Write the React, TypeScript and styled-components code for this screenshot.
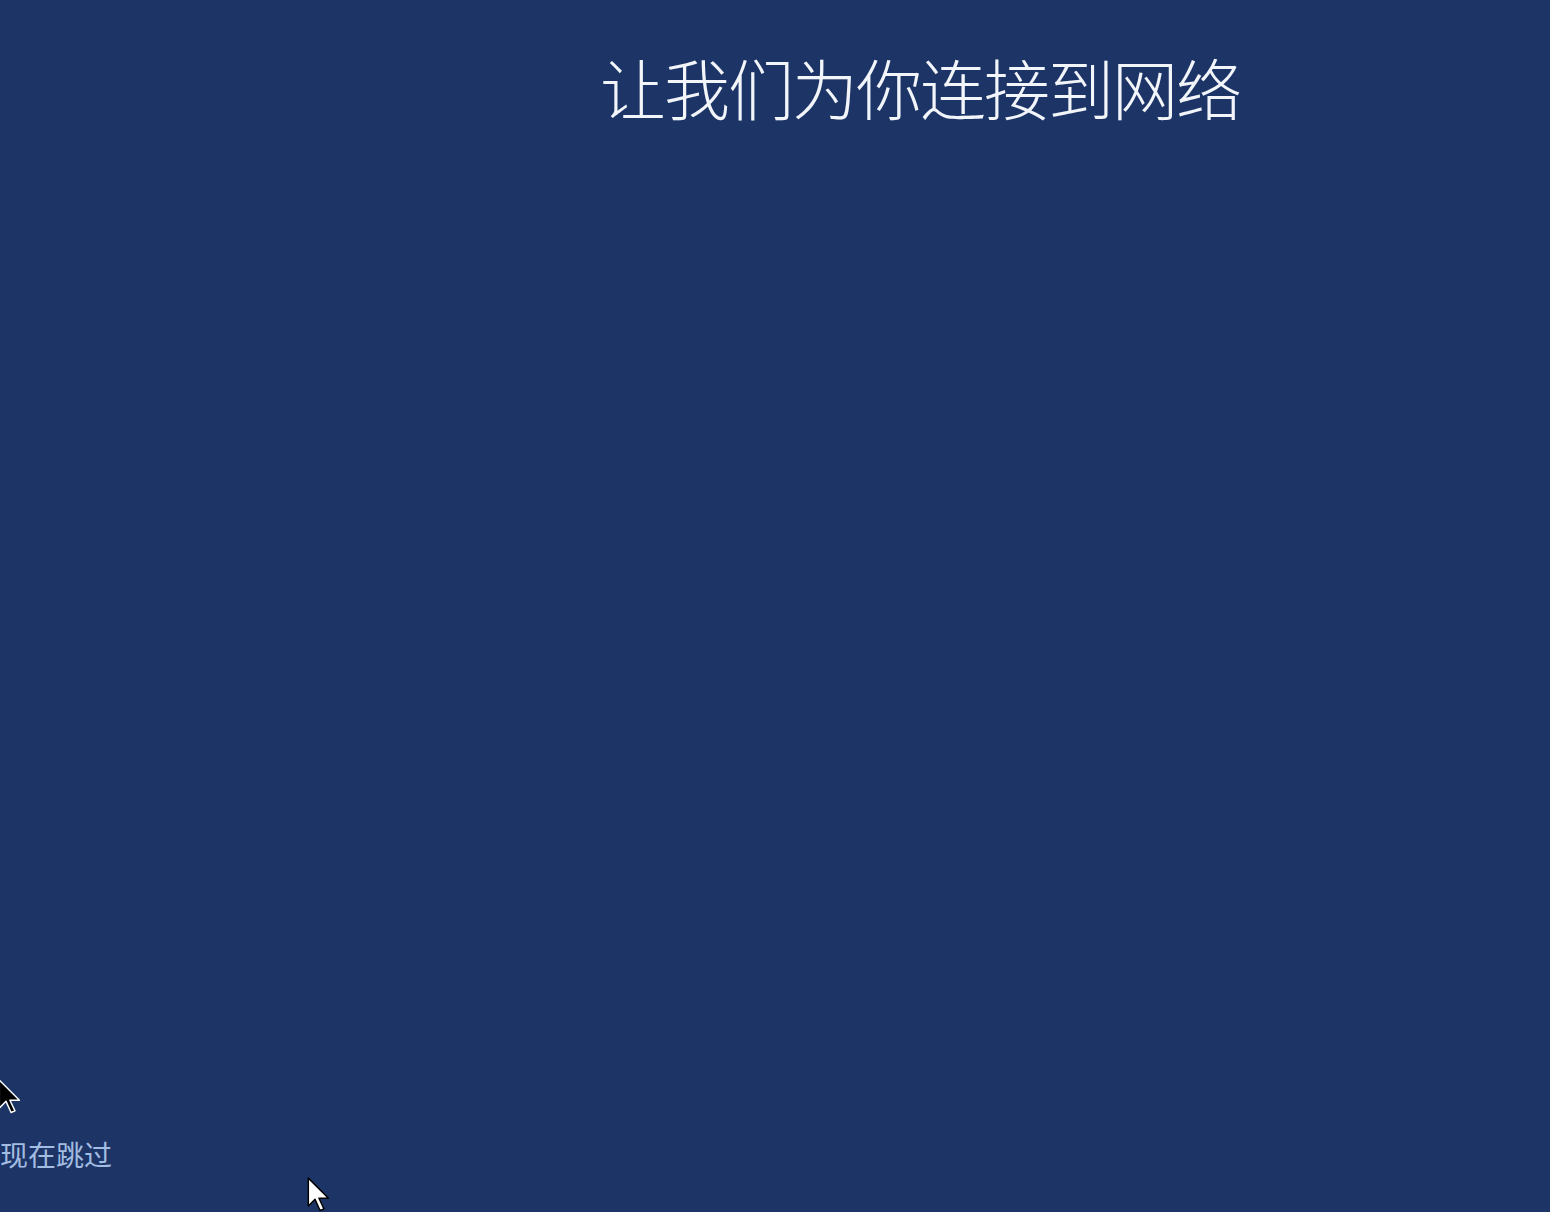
import styled, { createGlobalStyle } from "styled-components";

const GlobalStyle = createGlobalStyle`
  html, body {
    margin: 0;
    padding: 0;
    background: #1d3566;
  }
  body {
    font-family: "Noto Sans CJK SC", "Noto Sans", sans-serif;
  }
`;

const Screen = styled.div`
  position: relative;
  width: 1550px;
  height: 1212px;
  overflow: hidden;
  background: #1d3566;
  display: flex;
  flex-direction: column;
  justify-content: space-between;
`;

const Header = styled.header`
  padding: 41px 0 0 600px;
`;

const Title = styled.h1`
  margin: 0;
  font-size: 66px;
  font-weight: 300;
  line-height: 90px;
  letter-spacing: -2px;
  color: #f2f5fa;
  white-space: nowrap;
`;

const Footer = styled.footer`
  padding: 0 0 38px 0;
`;

const SkipLink = styled.a`
  display: inline-block;
  font-size: 28px;
  line-height: 40px;
  color: #a3bce2;
  text-decoration: none;
  cursor: pointer;
`;

const Pointer = styled.svg<{ $x: number; $y: number }>`
  position: absolute;
  left: ${(p) => p.$x}px;
  top: ${(p) => p.$y}px;
  width: 25px;
  height: 38px;
  overflow: visible;
`;

type CursorProps = { x: number; y: number; dark?: boolean };

const Cursor = ({ x, y, dark }: CursorProps) => (
  <Pointer $x={x} $y={y} viewBox="0 0 22 34">
    <path
      d="M1 1 L1 26 L7 20 L11.5 30 L15 28.5 L10.5 19 L19 19 Z"
      fill={dark ? "#000" : "#fff"}
      stroke={dark ? "#fff" : "#000"}
      strokeWidth="1.3"
      strokeLinejoin="round"
    />
  </Pointer>
);

export default function App() {
  return (
    <>
      <GlobalStyle />
      <Screen>
        <Header>
          <Title>让我们为你连接到网络</Title>
        </Header>
        <Footer>
          <SkipLink>现在跳过</SkipLink>
        </Footer>
        <Cursor x={-2} y={1079} dark />
        <Cursor x={307} y={1177} />
      </Screen>
    </>
  );
}
